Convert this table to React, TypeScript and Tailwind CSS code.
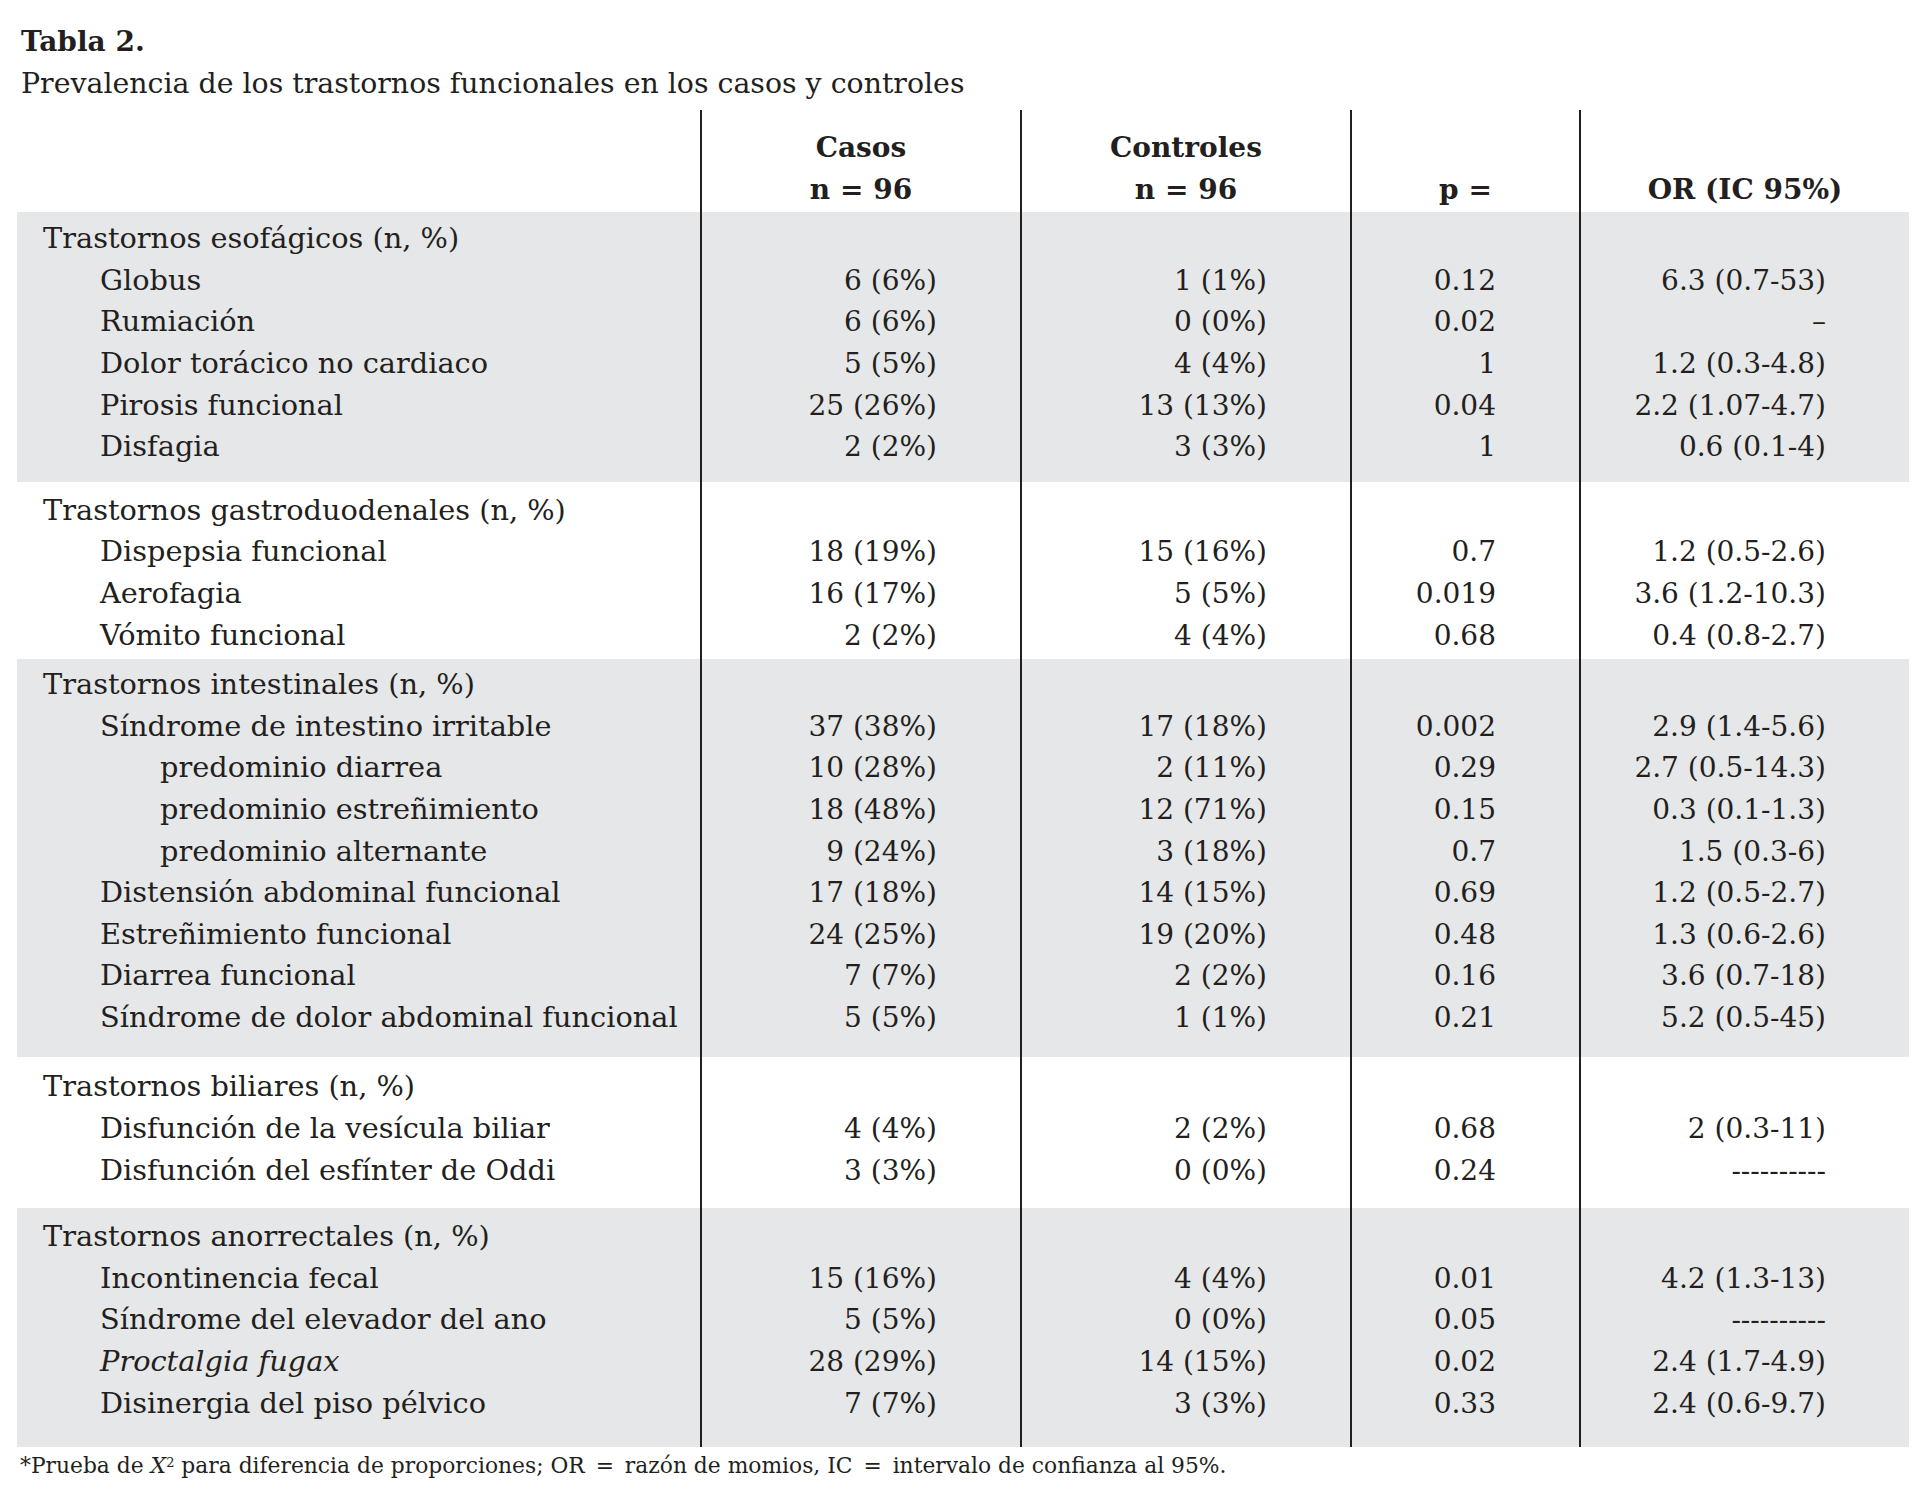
type Row = {
  label: string;
  level: 0 | 1 | 2;
  italic?: boolean;
  casos?: string;
  controles?: string;
  p?: string;
  or?: string;
};

type Group = {
  gray: boolean;
  pt: string;
  pb: string;
  rows: Row[];
};

const groups: Group[] = [
  {
    gray: true,
    pt: "pt-[6px]",
    pb: "pb-[14px]",
    rows: [
      { label: "Trastornos esofágicos (n, %)", level: 0 },
      { label: "Globus", level: 1, casos: "6 (6%)", controles: "1 (1%)", p: "0.12", or: "6.3 (0.7-53)" },
      { label: "Rumiación", level: 1, casos: "6 (6%)", controles: "0 (0%)", p: "0.02", or: "–" },
      { label: "Dolor torácico no cardiaco", level: 1, casos: "5 (5%)", controles: "4 (4%)", p: "1", or: "1.2 (0.3-4.8)" },
      { label: "Pirosis funcional", level: 1, casos: "25 (26%)", controles: "13 (13%)", p: "0.04", or: "2.2 (1.07-4.7)" },
      { label: "Disfagia", level: 1, casos: "2 (2%)", controles: "3 (3%)", p: "1", or: "0.6 (0.1-4)" },
    ],
  },
  {
    gray: false,
    pt: "pt-[8px]",
    pb: "pb-[3px]",
    rows: [
      { label: "Trastornos gastroduodenales (n, %)", level: 0 },
      { label: "Dispepsia funcional", level: 1, casos: "18 (19%)", controles: "15 (16%)", p: "0.7", or: "1.2 (0.5-2.6)" },
      { label: "Aerofagia", level: 1, casos: "16 (17%)", controles: "5 (5%)", p: "0.019", or: "3.6 (1.2-10.3)" },
      { label: "Vómito funcional", level: 1, casos: "2 (2%)", controles: "4 (4%)", p: "0.68", or: "0.4 (0.8-2.7)" },
    ],
  },
  {
    gray: true,
    pt: "pt-[5px]",
    pb: "pb-[19px]",
    rows: [
      { label: "Trastornos intestinales (n, %)", level: 0 },
      { label: "Síndrome de intestino irritable", level: 1, casos: "37 (38%)", controles: "17 (18%)", p: "0.002", or: "2.9 (1.4-5.6)" },
      { label: "predominio diarrea", level: 2, casos: "10 (28%)", controles: "2 (11%)", p: "0.29", or: "2.7 (0.5-14.3)" },
      { label: "predominio estreñimiento", level: 2, casos: "18 (48%)", controles: "12 (71%)", p: "0.15", or: "0.3 (0.1-1.3)" },
      { label: "predominio alternante", level: 2, casos: "9 (24%)", controles: "3 (18%)", p: "0.7", or: "1.5 (0.3-6)" },
      { label: "Distensión abdominal funcional", level: 1, casos: "17 (18%)", controles: "14 (15%)", p: "0.69", or: "1.2 (0.5-2.7)" },
      { label: "Estreñimiento funcional", level: 1, casos: "24 (25%)", controles: "19 (20%)", p: "0.48", or: "1.3 (0.6-2.6)" },
      { label: "Diarrea funcional", level: 1, casos: "7 (7%)", controles: "2 (2%)", p: "0.16", or: "3.6 (0.7-18)" },
      { label: "Síndrome de dolor abdominal funcional", level: 1, casos: "5 (5%)", controles: "1 (1%)", p: "0.21", or: "5.2 (0.5-45)" },
    ],
  },
  {
    gray: false,
    pt: "pt-[9px]",
    pb: "pb-[17px]",
    rows: [
      { label: "Trastornos biliares (n, %)", level: 0 },
      { label: "Disfunción de la vesícula biliar", level: 1, casos: "4 (4%)", controles: "2 (2%)", p: "0.68", or: "2 (0.3-11)" },
      { label: "Disfunción del esfínter de Oddi", level: 1, casos: "3 (3%)", controles: "0 (0%)", p: "0.24", or: "----------" },
    ],
  },
  {
    gray: true,
    pt: "pt-[8px]",
    pb: "pb-[23px]",
    rows: [
      { label: "Trastornos anorrectales (n, %)", level: 0 },
      { label: "Incontinencia fecal", level: 1, casos: "15 (16%)", controles: "4 (4%)", p: "0.01", or: "4.2 (1.3-13)" },
      { label: "Síndrome del elevador del ano", level: 1, casos: "5 (5%)", controles: "0 (0%)", p: "0.05", or: "----------" },
      { label: "Proctalgia fugax", level: 1, italic: true, casos: "28 (29%)", controles: "14 (15%)", p: "0.02", or: "2.4 (1.7-4.9)" },
      { label: "Disinergia del piso pélvico", level: 1, casos: "7 (7%)", controles: "3 (3%)", p: "0.33", or: "2.4 (0.6-9.7)" },
    ],
  },
];

const indent = ["pl-[26px]", "pl-[83px]", "pl-[143px]"];
const cols = "grid grid-cols-[683px_320px_330px_229px_330px]";
const line = "border-l-2 border-[#231f20]";

function ValueCol({ values, pt, pb }: { values: (string | undefined)[]; pt: string; pb: string }) {
  return (
    <div className={`${line} ${pt} ${pb} pr-[83px] text-right`}>
      {values.map((v, i) => (
        <div key={i} className="h-[41.6px] leading-[41.6px] whitespace-nowrap">
          {v ?? ""}
        </div>
      ))}
    </div>
  );
}

export default function App() {
  return (
    <div
      className="min-h-screen bg-white text-[#231f20] pl-[17px] pt-[21px]"
      style={{ fontFamily: '"DejaVu Serif", serif' }}
    >
      <div className="pl-[4px] leading-[41.6px]">
        <div className="font-bold text-[28px]">Tabla 2.</div>
        <div className="text-[28.4px]">Prevalencia de los trastornos funcionales en los casos y controles</div>
      </div>

      <div className="mt-[6px] w-[1892px] text-[28px]">
        {/* header */}
        <div className={`${cols} h-[102px] font-bold leading-[41.6px]`}>
          <div />
          <div className={`${line} pt-[17px] text-center`}>
            <div>Casos</div>
            <div>n = 96</div>
          </div>
          <div className={`${line} pt-[17px] text-center`}>
            <div>Controles</div>
            <div>n = 96</div>
          </div>
          <div className={`${line} pt-[58.6px] text-center`}>
            <div>p =</div>
          </div>
          <div className={`${line} pt-[58.6px] text-center`}>
            <div>OR (IC 95%)</div>
          </div>
        </div>

        {groups.map((g, gi) => (
          <div key={gi} className={`${cols} ${g.gray ? "bg-[#e6e7e8]" : "bg-white"}`}>
            <div className={`${g.pt} ${g.pb} text-[28.8px]`}>
              {g.rows.map((r, ri) => (
                <div
                  key={ri}
                  className={`h-[41.6px] leading-[41.6px] whitespace-nowrap ${indent[r.level]} ${r.italic ? "italic" : ""}`}
                >
                  {r.label}
                </div>
              ))}
            </div>
            <ValueCol values={g.rows.map((r) => r.casos)} pt={g.pt} pb={g.pb} />
            <ValueCol values={g.rows.map((r) => r.controles)} pt={g.pt} pb={g.pb} />
            <ValueCol values={g.rows.map((r) => r.p)} pt={g.pt} pb={g.pb} />
            <ValueCol values={g.rows.map((r) => r.or)} pt={g.pt} pb={g.pb} />
          </div>
        ))}
      </div>

      <p className="mt-[5px] pl-[3px] text-[21.8px] leading-[28px]">
        *Prueba de <span className="italic">X</span>
        <sup className="text-[13px]">2</sup> para diferencia de proporciones; OR <span className="mx-[4px]">=</span>{" "}
        razón de momios, IC <span className="mx-[4px]">=</span> intervalo de confianza al 95%.
      </p>
    </div>
  );
}
